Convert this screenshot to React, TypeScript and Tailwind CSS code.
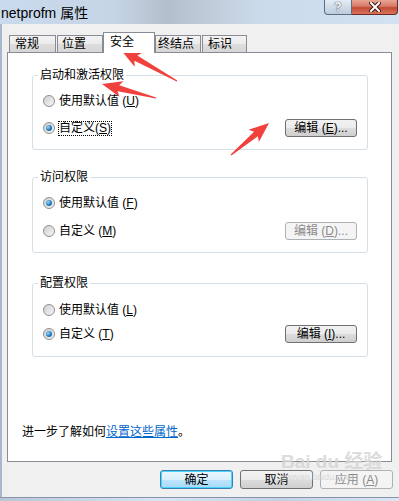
import React from 'react'

const font = { fontFamily: '"Liberation Sans", "Noto Sans CJK SC", sans-serif' }

function Radio({ checked }: { checked?: boolean }) {
  return (
    <span className="flex h-[12px] w-[12px] shrink-0 items-center justify-center rounded-full border border-[#8e8f8f] bg-[linear-gradient(135deg,#cfcfcf,#f6f6f6)]">
      {checked && (
        <span className="h-[6px] w-[6px] rounded-full bg-[radial-gradient(circle_at_35%_35%,#9edcf8,#1f78c4_55%,#0b4a86)]" />
      )}
    </span>
  )
}

function EditButton({ label, disabled }: { label: React.ReactNode; disabled?: boolean }) {
  return (
    <div
      className={
        disabled
          ? 'ml-auto flex h-[18px] w-[72px] items-center justify-center rounded-[3px] border border-[#adb2b5] bg-[#f4f4f4] text-[#8b8b8b]'
          : 'ml-auto flex h-[18px] w-[72px] items-center justify-center rounded-[3px] border border-[#707070] bg-[linear-gradient(180deg,#f2f2f2_0%,#ebebeb_50%,#dddddd_51%,#cfcfcf_100%)] text-black'
      }
    >
      {label}
    </div>
  )
}

function Row({
  checked,
  text,
  focus,
  button,
}: {
  checked?: boolean
  text: React.ReactNode
  focus?: boolean
  button?: React.ReactNode
}) {
  return (
    <div className="flex h-[18px] items-center">
      <Radio checked={checked} />
      <span className={focus ? 'ml-[3px] border border-dotted border-black px-[0px] leading-[13px]' : 'ml-[4px]'}>
        {text}
      </span>
      {button}
    </div>
  )
}

function Arrow({ tail, tip }: { tail: [number, number]; tip: [number, number] }) {
  const dx = tip[0] - tail[0]
  const dy = tip[1] - tail[1]
  const len = Math.sqrt(dx * dx + dy * dy)
  const ux = dx / len
  const uy = dy / len
  const nx = -uy
  const ny = ux
  const h = 17
  const neck: [number, number] = [tip[0] - ux * h, tip[1] - uy * h]
  const barb: [number, number] = [tip[0] - ux * (h + 3), tip[1] - uy * (h + 3)]
  const pts = [
    [tail[0] + nx * 0.6, tail[1] + ny * 0.6],
    [neck[0] + nx * 3, neck[1] + ny * 3],
    [barb[0] + nx * 8, barb[1] + ny * 8],
    tip,
    [barb[0] - nx * 8, barb[1] - ny * 8],
    [neck[0] - nx * 3, neck[1] - ny * 3],
    [tail[0] - nx * 0.6, tail[1] - ny * 0.6],
  ]
  return <polygon points={pts.map((p) => p.join(',')).join(' ')} fill="#f0413c" />
}

export default function App() {
  return (
    <div className="relative h-[501px] w-[399px] overflow-hidden text-[12px] leading-[14px] text-black" style={font}>
      {/* title bar */}
      <div className="flex h-[24px] items-start bg-[linear-gradient(90deg,#c9daed_0%,#c6d5e6_28%,#b3bfcc_42%,#bfcbd9_52%,#cbdaea_65%,#d3e2f2_100%)]">
        <span className="mt-[5px] ml-[1px] text-[14px] leading-[16px]">netprofm 属性</span>
        <div className="ml-auto mr-[1px] flex">
          <div className="flex h-[15px] w-[28px] items-center justify-center rounded-bl-[4px] border border-t-0 border-[#5e6d80] bg-[linear-gradient(180deg,#e4ecf5,#bccbdd)]">
            <span className="text-[12px] font-bold leading-[12px] text-white [text-shadow:0_0_1px_#2d3b4d,0_0_1px_#2d3b4d]">?</span>
          </div>
          <div className="flex h-[15px] w-[46px] items-center justify-center rounded-br-[4px] border border-t-0 border-l-0 border-[#6d2a20] bg-[linear-gradient(180deg,#e8a593_0%,#d67a68_45%,#c24a35_55%,#d9735c_100%)]">
            <svg width="12" height="10" viewBox="0 0 12 10">
              <path d="M2 1 L10 9 M10 1 L2 9" stroke="#3a1a14" strokeWidth="4" strokeLinecap="square" />
              <path d="M2 1 L10 9 M10 1 L2 9" stroke="#ffffff" strokeWidth="2" strokeLinecap="square" />
            </svg>
          </div>
        </div>
      </div>

      {/* body */}
      <div className="flex h-[473px] flex-col border-l-[2px] border-[#a7b8cc] bg-[#f0f0f0] pt-[8px]">
        {/* tabs */}
        <div className="relative z-10 flex h-[20px] items-end">
          <div className="ml-[7px] h-[17px] w-[47px] border border-b-0 border-[#898c95] bg-[linear-gradient(180deg,#f3f3f3_0%,#ebebeb_50%,#dddddd_51%,#d6d6d6_100%)] pl-[5px] pt-[1px]">常规</div>
          <div className="ml-[1px] h-[17px] w-[46px] border border-b-0 border-[#898c95] bg-[linear-gradient(180deg,#f3f3f3_0%,#ebebeb_50%,#dddddd_51%,#d6d6d6_100%)] pl-[4px] pt-[1px]">位置</div>
          <div className="-mb-[1px] h-[21px] w-[52px] border border-b-0 border-[#898c95] bg-white pl-[6px] pt-[2px]">安全</div>
          <div className="h-[17px] w-[46px] border border-b-0 border-[#898c95] bg-[linear-gradient(180deg,#f3f3f3_0%,#ebebeb_50%,#dddddd_51%,#d6d6d6_100%)] pl-[2px] pt-[1px]">终结点</div>
          <div className="ml-[1px] h-[17px] w-[45px] border border-b-0 border-[#898c95] bg-[linear-gradient(180deg,#f3f3f3_0%,#ebebeb_50%,#dddddd_51%,#d6d6d6_100%)] pl-[5px] pt-[1px]">标识</div>
        </div>

        {/* panel */}
        <div className="ml-[5px] flex h-[410px] w-[385px] flex-col border border-[#898c95] bg-white">
          <fieldset className="ml-[24px] mt-[15px] w-[336px] rounded-[3px] border border-[#d5dfe5] pb-[12px] pl-[10px] pr-[10px] pt-[10px]">
            <legend className="-ml-[5px] px-[2px]">启动和激活权限</legend>
            <div className="flex flex-col gap-[9px]">
              <Row text={<>使用默认值 (<u>U</u>)</>} />
              <Row checked focus text={<>自定义(<u>S</u>)</>} button={<EditButton label={<>编辑 (<u>E</u>)...</>} />} />
            </div>
          </fieldset>

          <fieldset className="ml-[24px] mt-[20px] w-[336px] rounded-[3px] border border-[#d5dfe5] pb-[12px] pl-[10px] pr-[10px] pt-[10px]">
            <legend className="-ml-[5px] px-[2px]">访问权限</legend>
            <div className="flex flex-col gap-[10px]">
              <Row checked text={<>使用默认值 (<u>F</u>)</>} />
              <Row text={<>自定义 (<u>M</u>)</>} button={<EditButton disabled label={<>编辑 (<u>D</u>)...</>} />} />
            </div>
          </fieldset>

          <fieldset className="ml-[24px] mt-[23px] w-[336px] rounded-[3px] border border-[#d5dfe5] pb-[13px] pl-[10px] pr-[10px] pt-[11px]">
            <legend className="-ml-[5px] px-[2px]">配置权限</legend>
            <div className="flex flex-col gap-[6px]">
              <Row text={<>使用默认值 (<u>L</u>)</>} />
              <Row checked text={<>自定义 (<u>T</u>)</>} button={<EditButton label={<>编辑 (<u>I</u>)...</>} />} />
            </div>
          </fieldset>

          <div className="mb-[22px] mt-auto pl-[14px]">
            进一步了解如何<span className="text-[#0066cc] underline">设置这些属性</span>。
          </div>
        </div>

        {/* dialog buttons */}
        <div className="mt-[8px] flex justify-end gap-[7px] pr-[6px]">
          <div className="flex h-[19px] w-[73px] items-center justify-center rounded-[3px] border border-[#3c7fb1] bg-[linear-gradient(180deg,#eaf6fd_0%,#d9f0fc_50%,#bee6fd_51%,#a7d9f5_100%)] shadow-[inset_0_0_0_1px_#48d4fd]">
            确定
          </div>
          <div className="flex h-[19px] w-[73px] items-center justify-center rounded-[3px] border border-[#707070] bg-[linear-gradient(180deg,#f2f2f2_0%,#ebebeb_50%,#dddddd_51%,#cfcfcf_100%)]">
            取消
          </div>
          <div className="flex h-[19px] w-[73px] items-center justify-center rounded-[3px] border border-[#adb2b5] bg-[#f4f4f4] text-[#8b8b8b]">
            应用 (<u>A</u>)
          </div>
        </div>
      </div>

      {/* window frame bottom */}
      <div className="h-[4px] border-t border-[#8696aa] bg-[linear-gradient(90deg,#b8c7d8,#d8e4f1_40%,#c3d2e3_70%,#dbe6f2)]" />

      {/* watermark */}
      <div className="pointer-events-none absolute left-[281px] top-[452px] flex flex-col items-start text-[#d4d4d4] opacity-80">
        <span className="text-[19px] font-bold leading-[20px]">Bai du 经验</span>
        <span className="text-[9px] leading-[10px]">jingyan.baidu.com</span>
      </div>

      {/* annotation arrows */}
      <svg className="pointer-events-none absolute left-0 top-0" width="399" height="501">
        <Arrow tail={[177, 81]} tip={[121, 50]} />
        <Arrow tail={[156, 98]} tip={[102, 84]} />
        <Arrow tail={[231, 155]} tip={[269, 123]} />
      </svg>
    </div>
  )
}
